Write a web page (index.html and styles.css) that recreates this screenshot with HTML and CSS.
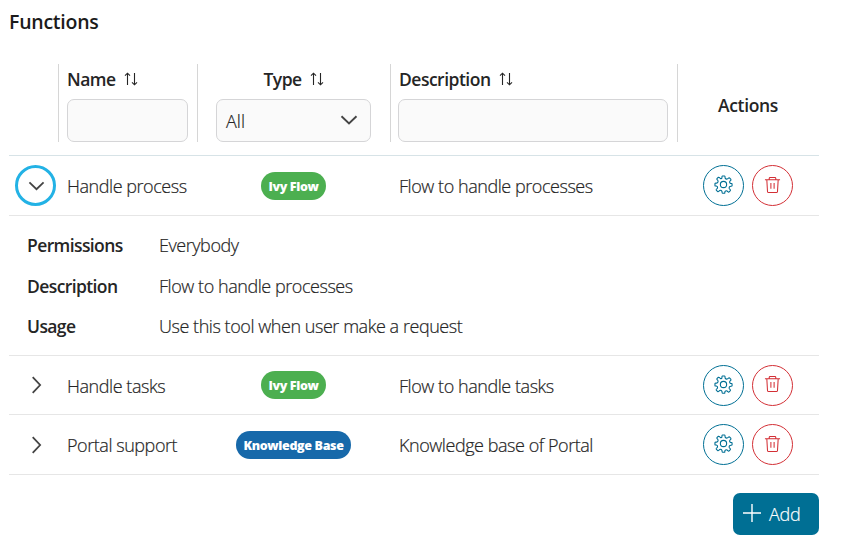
FILE: index.html
```html
<!DOCTYPE html>
<html lang="en">
<head>
<meta charset="utf-8">
<title>Functions</title>
<link rel="stylesheet" href="styles.css">
</head>
<body>
<svg class="defs" width="0" height="0" aria-hidden="true">
  <symbol id="sort" viewBox="0 0 14 14"><path d="M3.500 13V1.500M1 3.700L3.500 1.200l2.500 2.500M10.500 1v11.500M8 10.300l2.500 2.500 2.500-2.500"/></symbol>
  <symbol id="down" viewBox="0 0 18 10"><path d="M1.500 1.200L9 8.400l7.500-7.200"/></symbol>
  <symbol id="right" viewBox="0 0 10 18"><path d="M1.200 1.200L8.600 9l-7.400 7.800"/></symbol>
  <symbol id="gear" viewBox="0 0 20 20"><circle cx="10" cy="10" r="3.300"/><path d="M8.300 3.300C8.500 2.200 8 1.200 8.900 1h2.200c.9.200.4 1.200.6 2.300.6.900 1.700 1.300 2.600.8.900-.7 1.300-1.600 2-1l1.500 1.600c.5.700-.6 1.100-1.200 2-.4 1 .1 2 1.100 2.300 1.100.1 1.300-.3 1.300.5v2c-.2.700-1.200.2-2.200.6-.9.500-1.100 1.600-.6 2.400.7.900 1.600 1.300 1 2l-1.500 1.500c-.7.500-1.100-.6-2-1.200-1-.4-2 .1-2.300 1.100-.1 1.100.3 1.300-.5 1.300H9c-.8-.2-.3-1.200-.7-2.200-.5-.9-1.500-1.100-2.400-.6-.9.700-1.300 1.600-2 1l-1.500-1.500c-.5-.7.6-1.100 1.200-2 .4-1-.1-2-1.100-2.300C1.400 11.500 1 11.900 1 11.100v-2c.2-.9 1.200-.4 2.300-.6.900-.6 1.300-1.700.8-2.600-.7-.9-1.600-1.300-1-2l1.500-1.500c.7-.5 1.100.6 2 1.200.8.300 1.400.2 1.700-.3z"/></symbol>
  <symbol id="trash" viewBox="0 0 18 18"><path d="M1 3.500h16M5.500 3.500V2q0-1 1-1h5q1 0 1 1v1.500M3 3.800l.7 12q.1 1.200 1.200 1.200h8.200q1.100 0 1.200-1.200l.7-12M7.300 7v6M10.700 7v6"/></symbol>
  <symbol id="plus" viewBox="0 0 20 20"><path d="M10 1v18M1 10h18"/></symbol>
</svg>
<main>
  <h1>Functions</h1>
  <section class="table">
    <div class="row head">
      <div class="cell"></div>
      <div class="cell name"><div class="label"><span>Name</span><svg><use href="#sort"/></svg></div><input aria-label="Name"></div>
      <div class="cell type"><div class="label"><span>Type</span><svg><use href="#sort"/></svg></div><div class="select"><span>All</span><svg class="down"><use href="#down"/></svg></div></div>
      <div class="cell desc"><div class="label"><span>Description</span><svg><use href="#sort"/></svg></div><input aria-label="Description"></div>
      <div class="cell actions-title"><span>Actions</span></div>
    </div>
    <div class="row item">
      <div class="toggle focused"><svg class="down"><use href="#down"/></svg></div>
      <div class="text"><span>Handle process</span></div>
      <div class="tag-cell"><span class="tag flow">Ivy Flow</span></div>
      <div class="text"><span>Flow to handle processes</span></div>
      <div class="actions"><button class="edit" aria-label="Edit"><svg><use href="#gear"/></svg></button><button class="delete" aria-label="Delete"><svg><use href="#trash"/></svg></button></div>
    </div>
    <dl class="details">
      <dt>Permissions</dt><dd>Everybody</dd>
      <dt>Description</dt><dd>Flow to handle processes</dd>
      <dt>Usage</dt><dd>Use this tool when user make a request</dd>
    </dl>
    <div class="row item short">
      <div class="toggle"><svg class="right"><use href="#right"/></svg></div>
      <div class="text"><span>Handle tasks</span></div>
      <div class="tag-cell"><span class="tag flow">Ivy Flow</span></div>
      <div class="text"><span>Flow to handle tasks</span></div>
      <div class="actions"><button class="edit" aria-label="Edit"><svg><use href="#gear"/></svg></button><button class="delete" aria-label="Delete"><svg><use href="#trash"/></svg></button></div>
    </div>
    <div class="row item">
      <div class="toggle"><svg class="right"><use href="#right"/></svg></div>
      <div class="text"><span>Portal support</span></div>
      <div class="tag-cell"><span class="tag base">Knowledge Base</span></div>
      <div class="text"><span>Knowledge base of Portal</span></div>
      <div class="actions"><button class="edit" aria-label="Edit"><svg><use href="#gear"/></svg></button><button class="delete" aria-label="Delete"><svg><use href="#trash"/></svg></button></div>
    </div>
  </section>
  <footer><button class="add"><svg><use href="#plus"/></svg><span>Add</span></button></footer>
</main>
</body>
</html>
```
FILE: styles.css
```css
* { box-sizing: border-box; }
body { margin: 0; background: #fff; color: #252525; font: 300 18px/24px "Open Sans", "Noto Sans", sans-serif; letter-spacing: -0.45px; -webkit-text-stroke: 0.2px; }
svg { fill: none; stroke: currentColor; flex: none; }
.defs { position: absolute; }
main { padding: 8px 26px 7px 9px; }
h1 { margin: 0; height: 56px; font-size: 19.5px; line-height: 27px; font-weight: 600; letter-spacing: -0.25px; color: #1b1b1b; -webkit-text-stroke: 0; }
.row { display: grid; grid-template-columns: 50px 139px 193px 287px 141px; }
.head { height: 92px; border-bottom: 1px solid #d7e3e7; font-size: 17.5px; font-weight: 600; letter-spacing: -0.5px; -webkit-text-stroke: 0; }
.cell { height: 78px; border-right: 1px solid #d6d6d6; padding: 0 9px 0 8px; }
.cell:last-child { border: 0; }
.label { height: 35px; padding-top: 3px; display: flex; gap: 8px; align-items: flex-start; line-height: 24px; }
.label svg { width: 14px; height: 14px; margin-top: 5px; stroke-width: 1.1; }
.desc { padding-left: 7px; }
.desc .label { padding-left: 1px; }
.type { padding: 0 19px 0 18px; }
.type .label { justify-content: center; }
input, .select { display: block; width: 100%; height: 43px; border: 1px solid #d5d5d7; border-radius: 7px; background: #fafafa; }
.select { display: flex; justify-content: space-between; padding: 9px 12px 0 9px; font-size: 18px; font-weight: 300; letter-spacing: 0; -webkit-text-stroke: 0.2px; }
.select svg { margin-top: 6px; color: #444; }
.down { width: 18px; height: 10px; stroke-width: 1.9; }
.right { width: 11px; height: 18px; margin-left: 1px; stroke-width: 1.8; }
.actions-title { padding-top: 29px; text-align: center; letter-spacing: -0.35px; }
.item { height: 60px; border-bottom: 1px solid #e6e6e6; align-items: center; }
.short { height: 59px; }
.text { padding: 1px 0 0 8px; white-space: nowrap; }
.toggle { width: 41px; height: 41px; margin-left: 6px; border-radius: 50%; display: grid; place-items: center; color: #444; }
.focused { border: 3px solid #23b2e5; }
.focused svg { width: 17px; margin-left: 1px; }
.tag-cell { display: flex; justify-content: center; padding-right: 2px; }
.tag { height: 28px; padding: 0 7px; border-radius: 14px; color: #fff; font-size: 12.5px; line-height: 29px; font-weight: 800; letter-spacing: -0.35px; white-space: nowrap; -webkit-text-stroke: 0; }
.flow { background: #4caf50; }
.base { background: #1769aa; }
.actions { display: flex; gap: 8px; padding-left: 25px; }
button { font: inherit; letter-spacing: inherit; }
.actions button { width: 41px; height: 41px; padding: 0 1px 2px 0; border: 1px solid; border-radius: 50%; background: #fff; display: grid; place-items: center; }
.actions .edit { color: #006f94; }
.actions .delete { color: #d32f35; padding: 0 0 2px; }
.actions svg { width: 19px; height: 19px; stroke-width: 1.15; }
.actions .delete svg { width: 17px; height: 18px; stroke-width: 1.1; }
.details { height: 140px; margin: 0; padding: 17px 18px; border-bottom: 1px solid #e6e6e6; display: grid; grid-template: repeat(3, 40.5px) / 132px 1fr; }
dt { font-size: 17.5px; font-weight: 600; letter-spacing: -0.6px; -webkit-text-stroke: 0; }
dd { margin: 0; }
footer { display: flex; justify-content: flex-end; padding-top: 18px; }
.add { width: 86px; height: 42px; padding: 0 0 0 9px; border: 0; border-radius: 7px; background: #006f94; color: #fff; display: flex; align-items: center; gap: 7px; letter-spacing: -0.2px; }
.add svg { width: 20px; height: 20px; stroke-width: 1.4; margin-bottom: 2px; }
```
